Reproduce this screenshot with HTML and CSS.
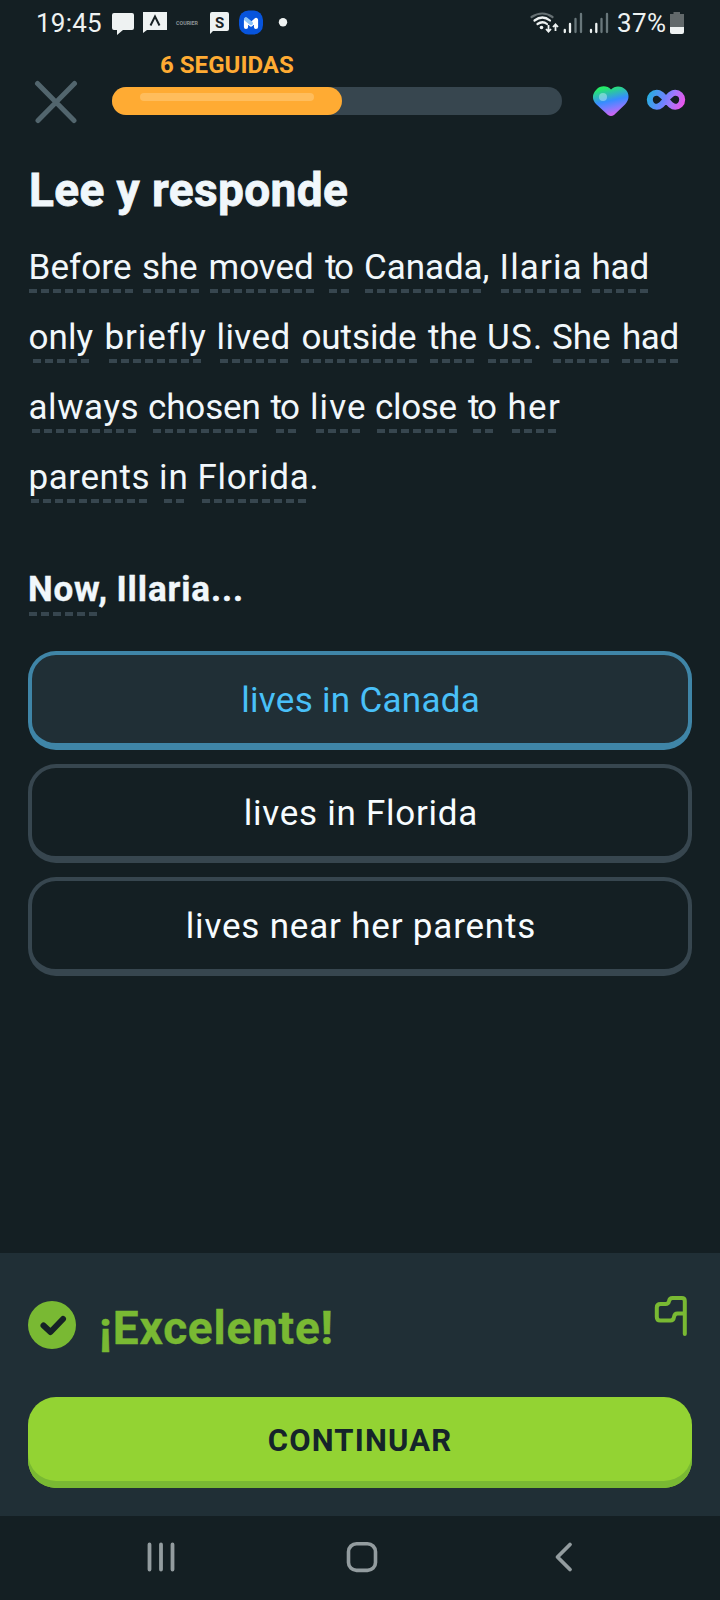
FILE: index.html
```html
<!DOCTYPE html>
<html lang="es">
<head>
<meta charset="utf-8">
<title>Lee y responde</title>
<link rel="stylesheet" href="styles.css">
</head>
<body>
<div class="screen">
  <header class="status">
    <span class="clock" data-ink="38 101">19:45</span>
    <svg class="notifs" viewBox="110 0 180 46" width="180" height="46">
      <g fill="#eef2f2">
        <path d="M114 13h18q2 0 2 2v13q0 2-2 2h-9l-6 5v-5h-3q-2 0-2-2V15q0-2 2-2z"/>
        <path d="M143 12h24v18h-20l-4 3z"/>
        <path d="M212 12h15q2 0 2 2v15q0 2-2 2h-14l-3 3V14q0-2 2-2z"/>
        <circle cx="283" cy="22.3" r="4.2"/>
      </g>
      <path d="M150.500 25.500l4.500-9 4.500 9" fill="none" stroke="#182225" stroke-width="2"/>
      <text x="176" y="25" class="micro" textLength="22" lengthAdjust="spacingAndGlyphs">COURIER</text>
      <text x="219.500" y="27.500" class="badge" text-anchor="middle">S</text>
      <rect x="239" y="10.500" width="24" height="24" rx="9.500" fill="#0754dc"/>
      <path d="M246 27v-7l5 4.500 5-4.500v7" fill="none" stroke="#fff" stroke-width="4.200" stroke-linecap="round" stroke-linejoin="round"/>
      <path d="M246 19.200l5 4" fill="none" stroke="#8dc4f8" stroke-width="4" stroke-linecap="round" stroke-linejoin="round"/>
    </svg>
    <svg class="signals" viewBox="528 0 84 46" width="84" height="46">
      <g fill="none" stroke-width="2.200" stroke-linecap="round">
        <path d="M531.500 17q11-7 21 0" stroke="#667073"/>
        <path d="M534.500 20.500q8-6 15.500 0M537.500 24q5-3.500 9.500 0" stroke="#eef2f2"/>
      </g>
      <circle cx="541.500" cy="27.500" r="1.800" fill="#eef2f2"/>
      <path d="M548.500 25v6.500m-2.500-2.500l2.500 2.700 2.500-2.700M555.500 31v-6.500m-2.500 2.500l2.500-2.700 2.500 2.700" fill="none" stroke="#eef2f2" stroke-width="1.800"/>
      <g stroke-width="2.300" stroke-linecap="round">
        <path d="M564.800 30v2M570 24v8M591 30v2M596.300 24v8" stroke="#eef2f2"/>
        <path d="M575.500 19v13M581 14v18M601.500 19v13M607 14v18" stroke="#69777b"/>
      </g>
    </svg>
    <span class="charge" data-ink="618 665">37%</span>
    <svg class="battery" viewBox="670 0 14 46" width="14" height="46">
      <path d="M673.500 12h6.500v2h4v13h-14V14h3.500z" fill="#62696b"/>
      <path d="M670 27h14v5q0 2-2 2h-10q-2 0-2-2z" fill="#eef2f2"/>
    </svg>
  </header>

  <div class="lesson">
    <svg class="close" viewBox="34 80 44 44" width="44" height="44"><path d="M37.500 83.500l36.500 37M74.500 83.500l-36.500 37" stroke="#52656d" stroke-width="5" stroke-linecap="round"/></svg>
    <div class="meter">
      <div class="streak"><span data-ink="161 293">6 SEGUIDAS</span></div>
      <div class="track"><div class="fill"><div class="shine"></div></div></div>
    </div>
    <svg class="heart" viewBox="592 84 38 34" width="38" height="34">
      <defs>
        <linearGradient id="hg" x1=".3" y1="0" x2=".58" y2="1"><stop offset=".05" stop-color="#25ec67"/><stop offset=".5" stop-color="#378cff"/><stop offset=".72" stop-color="#7c7cff"/><stop offset="1" stop-color="#df60ef"/></linearGradient>
      </defs>
      <path d="M611 89.500c-4-4.500-11-4-14.500 0-4.500 4.500-5 10 0 15l11.500 10.500q3 2 6 0l11-10.500c4.500-4.500 4.500-10.500 1-14.500-4.500-4.500-11-4.500-15-.5z" fill="url(#hg)"/>
      <circle cx="603" cy="97" r="4" fill="#d9f7ff" opacity=".42"/>
    </svg>
    <svg class="infinity" viewBox="644 84 44 34" width="44" height="34">
      <defs><linearGradient id="ig" gradientUnits="userSpaceOnUse" x1="647" y1="92" x2="685" y2="107"><stop offset="0" stop-color="#1fb3dd"/><stop offset=".45" stop-color="#6c83ff"/><stop offset=".65" stop-color="#a477fb"/><stop offset="1" stop-color="#f84ee8"/></linearGradient></defs>
      <path d="M666 99.500c-4-4.500-6-6.700-9.200-6.700a6.900 6.900 0 0 0 0 14c3.200 0 5.500-2.700 9.200-7.300 4-4.500 6-6.700 9.200-6.700a6.900 6.900 0 0 1 0 14c-3.200 0-5.500-2.700-9.200-7.300z" fill="none" stroke="url(#ig)" stroke-width="6"/>
    </svg>
  </div>

  <main>
    <h1><span data-ink="31 347">Lee y responde</span></h1>
    <div class="passage">
      <p class="line"><span class="word" data-ink="30.5 131" data-dash="29 9">Before</span> <span class="word" data-ink="143 197" data-dash="143 5">she</span> <span class="word" data-ink="210.500 312" data-dash="210 9">moved</span> <span class="word" data-ink="325 353" data-dash="329 2">to</span> <span class="word" data-ink="366 488.500" data-dash="365 10">Canada,</span> <span class="word" data-ink="502.500 580.500" data-dash="501 7">Ilaria</span> <span class="word" data-ink="593.500 647.500" data-dash="592 5">had</span></p>
      <p class="line"><span class="word" data-ink="29.500 93.500" data-dash="33 5">only</span> <span class="word" data-ink="106.500 205.500" data-dash="109 8">briefly</span> <span class="word" data-ink="218.500 288.500" data-dash="220 6">lived</span> <span class="word" data-ink="302.500 416" data-dash="301 10">outside</span> <span class="word" data-ink="428 476.500" data-dash="430 4">the</span> <span class="word" data-ink="489 540" data-dash="488 4">US.</span> <span class="word" data-ink="553 610" data-dash="553 5">She</span> <span class="word" data-ink="624 677.500" data-dash="622 5">had</span></p>
      <p class="line"><span class="word" data-ink="29.500 137.500" data-dash="32 9">always</span> <span class="word" data-ink="149 258.500" data-dash="153 9">chosen</span> <span class="word" data-ink="270.500 299" data-dash="276 2">to</span> <span class="word" data-ink="312 365" data-dash="316 4">live</span> <span class="word" data-ink="376 456.500" data-dash="377 7">close</span> <span class="word" data-ink="468 496" data-dash="473 2">to</span> <span class="word" data-ink="509.500 560" data-dash="512 4">her</span></p>
      <p class="line"><span class="word" data-ink="30.500 148.500" data-dash="31 10">parents</span> <span class="word" data-ink="161 185.500" data-dash="164 2">in</span> <span class="word" data-ink="199.500 316.500" data-dash="202 9">Florida.</span></p>
    </div>
    <p class="line prompt"><span class="word" data-ink="30 105.500" data-dash="29 6">Now,</span> <span class="word" data-ink="118.500 241">Illaria...</span></p>
    <div class="choices">
      <div class="choice chosen"><span data-ink="243.500 479">lives in Canada</span></div>
      <div class="choice"><span data-ink="246.500 477">lives in Florida</span></div>
      <div class="choice"><span data-ink="187.500 534">lives near her parents</span></div>
    </div>
  </main>

  <section class="result">
    <div class="verdict">
      <svg class="tick" viewBox="28 1301 48 48" width="48" height="48"><circle cx="52" cy="1325" r="24" fill="#79b933"/><path d="M43.500 1325.500l7 6.500 12.500-13" fill="none" stroke="#152226" stroke-width="6" stroke-linecap="round" stroke-linejoin="round"/></svg>
      <h2><span data-ink="101.500 332">¡Excelente!</span></h2>
      <svg class="flag" viewBox="652 1294 38 44" width="38" height="44"><path d="M684.800 1334v-33q0-3-3-3h-9.300q-3 0-3.500 3.200-.5 2.800-3.500 2.800h-5q-3.700 0-3.700 3.500v9.500q0 3.500 3.500 3.500h10.200q3 0 3.500-3.500.5-3.500 3.500-3.500h7.300" fill="none" stroke="#79b933" stroke-width="4" stroke-linecap="round" stroke-linejoin="round"/></svg>
    </div>
    <div class="continue"><span data-ink="268.500 451">CONTINUAR</span></div>
  </section>

  <nav>
    <svg viewBox="146 1540 30 34" width="30" height="34"><path d="M149.500 1544.500v25M161 1544.500v25M172.500 1544.500v25" stroke="#939c9f" stroke-width="3.800" stroke-linecap="round"/></svg>
    <svg class="home" viewBox="345 1540 34 34" width="34" height="34"><rect x="348.500" y="1543.800" width="27" height="26.600" rx="8" fill="none" stroke="#939c9f" stroke-width="3.600"/></svg>
    <svg class="back" viewBox="553 1540 22 34" width="22" height="34"><path d="M570 1544.500l-12.500 12.500 12.500 12.500" fill="none" stroke="#939c9f" stroke-width="3.800" stroke-linecap="round" stroke-linejoin="round"/></svg>
  </nav>
</div>
<script src="fit.js"></script>
</body>
</html>
```
FILE: styles.css
```css
* { box-sizing: border-box; margin: 0; }
html, body { background: #141f23; }
body { font-family: Roboto, "Noto Sans", sans-serif; color: #f1f7fb; }
svg { display: block; flex: none; }
[data-ink] { display: inline-block; white-space: nowrap; flex: none; text-align: left; }

.screen { width: 720px; height: 1600px; display: flex; flex-direction: column; background: #141f23; overflow: hidden; }

.status { height: 46px; padding-left: 38px; padding-right: 36px; display: flex; font-size: 26px; line-height: 46px; color: #eef2f2; flex: none; }
.clock, .charge { height: 46px; }
.notifs { margin-left: 9px; }
.signals { margin-left: auto; }
.charge { margin-left: 6px; }
.battery { margin-left: 5px; }
.micro { font-size: 5px; font-weight: 700; fill: #8b9496; }
.badge { font-size: 15px; font-weight: 700; fill: #182225; }

.lesson { height: 113px; padding-left: 34px; display: flex; flex: none; }
.close { margin-top: 34px; }
.meter { width: 450px; margin-left: 34px; }
.streak { height: 41px; padding-left: 49px; font-size: 24px; line-height: 38px; font-weight: 700; color: #ffab33; }
.track { height: 28px; border-radius: 14px; background: #37464f; }
.fill { width: 230px; height: 28px; border-radius: 14px; background: #ffab33; padding: 6px 28px; }
.shine { height: 8px; border-radius: 4px; background: #ffbd5c; }
.heart { margin: 38px 0 0 30px; }
.infinity { margin: 38px 0 0 14px; }

main { flex: 1; }
h1 { height: 73px; padding-left: 31px; font-size: 46px; line-height: 62px; -webkit-text-stroke: 0.8px; }
.line { height: 70px; display: flex; font-size: 35px; line-height: 72px; }
.word { position: relative; }
.word[data-dash]::after {
  content: "";
  position: absolute;
  left: var(--dash-left);
  top: 57px;
  width: var(--dash-width);
  height: 4px;
  background: repeating-linear-gradient(90deg, #37464f 0 8px, transparent 8px 12px);
}
.prompt { margin-top: 42px; font-weight: 700; -webkit-text-stroke: 0.4px; }
.prompt .word[data-dash]::after { top: 58px; }

.choices { margin-top: 27px; padding: 0 28px; display: flex; flex-direction: column; gap: 14px; }
.choice { height: 99px; border: 4px solid #37464f; border-bottom-width: 7px; border-radius: 28px; text-align: center; font-size: 35px; line-height: 92px; padding-left: 2px; color: #f7fcff; }
.chosen { background: #202f36; border-color: #3f85a7; color: #49c0f8; }

.result { height: 263px; padding: 0 28px; background: #202f36; flex: none; }
.verdict { height: 144px; display: flex; }
.tick { margin-top: 48px; }
h2 { margin: 44px 0 0 25px; font-size: 46px; line-height: 62px; color: #79b933; -webkit-text-stroke: 0.4px; }
.flag { margin: 41px 2px 0 auto; }
.continue { height: 91px; border-radius: 28px; background: #93d333; box-shadow: inset 0 -7px #79b933; text-align: center; font-size: 31px; line-height: 88px; font-weight: 700; color: #15242a; }

nav { height: 84px; padding: 24px 0 0 146px; display: flex; flex: none; }
.home { margin-left: 169px; }
.back { margin-left: 174px; }
```
FILE: fit.js
```js
// Fits every label to its ink range (left and right edge) by adjusting tracking.
const ctx = document.createElement('canvas').getContext('2d');

function fit(el) {
  const [left, right] = el.dataset.ink.split(' ').map(Number);
  const style = getComputedStyle(el);
  const text = el.textContent;
  ctx.font = `${style.fontWeight} ${style.fontSize} ${style.fontFamily}`;
  const m = ctx.measureText(text);
  const ink = m.actualBoundingBoxLeft + m.actualBoundingBoxRight;
  el.style.width = `${right - left}px`;
  el.style.letterSpacing = `${(right - left - ink) / (text.length - 1)}px`;
  el.style.textIndent = `${m.actualBoundingBoxLeft}px`;
  if (el.dataset.dash) {
    const [start, count] = el.dataset.dash.split(' ').map(Number);
    el.style.setProperty('--dash-left', `${start - left}px`);
    el.style.setProperty('--dash-width', `${count * 12 - 4}px`);
  }
}

document.querySelectorAll('[data-ink]').forEach(fit);

// Spaces the words of each line by the gap between neighbouring ink ranges.
document.querySelectorAll('.line').forEach((line) => {
  let edge = 0;
  line.querySelectorAll('.word').forEach((word) => {
    const [left, right] = word.dataset.ink.split(' ').map(Number);
    word.style.marginLeft = `${left - edge}px`;
    edge = right;
  });
});
```
